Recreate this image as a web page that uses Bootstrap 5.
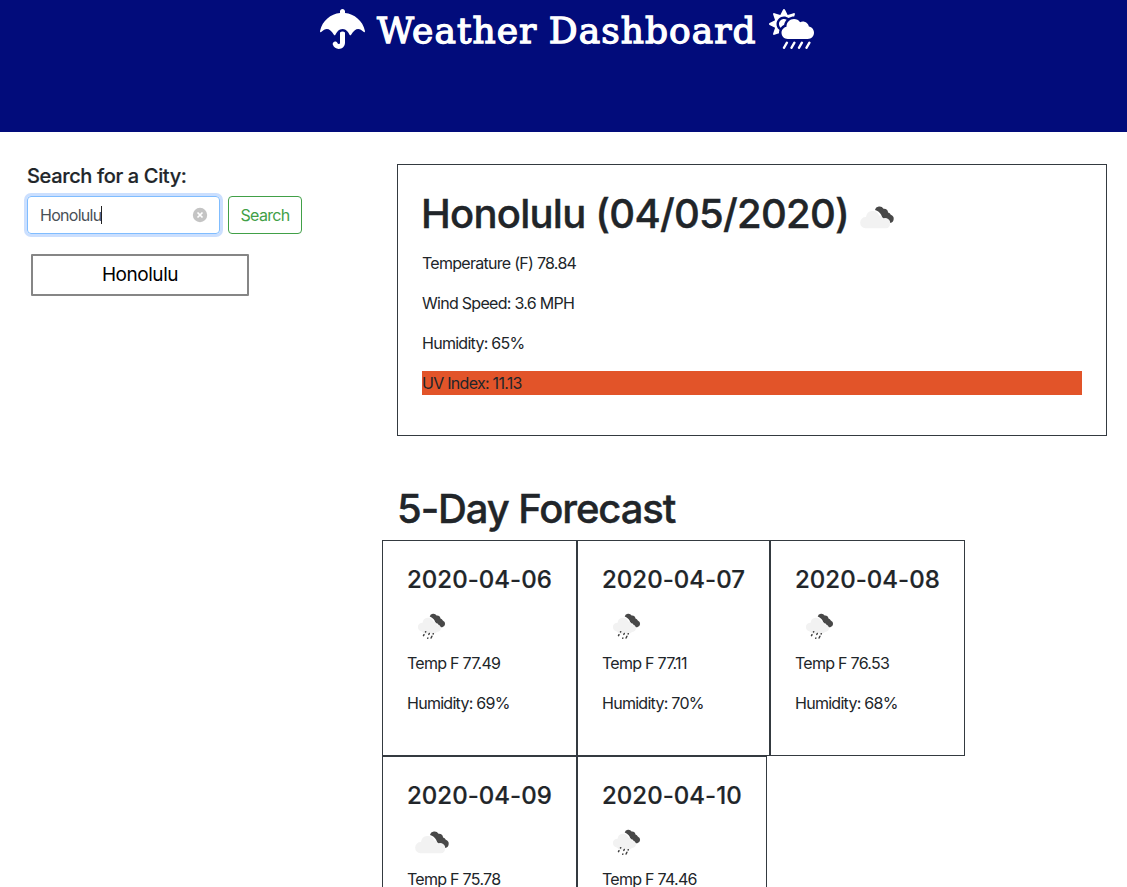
<!DOCTYPE html>
<html lang="en">
<head>
<meta charset="utf-8">
<meta name="viewport" content="width=device-width, initial-scale=1">
<title>Weather Dashboard</title>
<link href="https://cdn.jsdelivr.net/npm/bootstrap@5.3.0/dist/css/bootstrap.min.css" rel="stylesheet">
<style>
body{font-family:Inter,"Liberation Sans",sans-serif;color:#212529;height:100vh;overflow:hidden;letter-spacing:-.72px}
.site-header{background:#020c7b;height:132px;color:#fff;padding:9px 0 0 7px}
.site-header svg{width:45px;height:40px;flex:none}
.site-title{font:400 36px/44px "DejaVu Serif",serif;letter-spacing:1.05px;word-spacing:-1px;-webkit-text-stroke:1.3px #fff;width:380px;margin:0 12px;white-space:nowrap}
.side-col{width:382px;padding:32px 0 0 27px}
.side-col h5{font-size:20px;line-height:24px;letter-spacing:-.35px;margin-bottom:8px;-webkit-text-stroke:.2px}
.city-box{width:193px;height:38px;border:1px solid #80bdff;border-radius:4px;box-shadow:0 0 0 3px #cbdffe;padding:0 11px 0 12px;color:#495057}
.caret{width:1px;height:18px;background:#222}
.btn-find{width:74px;height:38px;padding:0;color:#41a047;border:1px solid #41a047;border-radius:4px;letter-spacing:-.7px}
.history-btn{width:218px;height:42px;margin:20px 0 0 4px;border:2px solid #868686;border-radius:1px;background:#fff;color:#000;font-size:19px;letter-spacing:-.45px}
.main-col{width:745px;padding-top:32px}
.panel{border:1px solid #343a40;padding:24px}
.today{width:710px;height:272px;margin-left:15px}
.today h1,.forecast-title{font-size:40px;letter-spacing:-.75px;white-space:nowrap;-webkit-text-stroke:.4px}
.today h1{height:54px;line-height:50px;margin-left:-1px}
.today svg,.day svg{width:50px;height:50px;flex:none}
.today h1 svg{margin:3px 0 0 3px}
.uv{background:#e25429}
.forecast-title{margin:48px 0 8px 15px;line-height:50px;height:48px;letter-spacing:-1.1px}
.day{height:216px}
.day h4{font-size:24px;line-height:30px;height:28px;letter-spacing:.03px;white-space:nowrap;-webkit-text-stroke:.2px}
.day svg{display:block}
.w-a{width:195px}.w-b{width:193px}.w-c{width:190px}
</style>
</head>
<body>
<svg width="0" height="0" class="position-absolute">
<symbol id="cloudy" viewBox="0 0 50 50">
<path fill="#484848" d="M23 18a4.600 4.600 0 0 1 8.500-1.200 4.300 4.300 0 0 1 4.600 3.700 4.200 4.200 0 0 1 2.700 2.200 4.300 4.300 0 0 1-.6 8.300c-1.800 0-3-.9-3.600-2.300-1-.6-1.500-1.200-1.800-2.200-2.200-.4-3.200-1.600-3.500-3.600-1.500-2.500-3.500-4-6.300-4.900z"/>
<path fill="#f2f2f2" d="M13.500 36.300a5.600 5.600 0 0 1 .5-11.200 6.800 6.800 0 0 1 13.200-1.500 4 4 0 0 1 3.500 3.600 4.600 4.600 0 0 1 7.300 4.800c0 2.500-1.500 4.300-4 4.300z"/>
</symbol>
<symbol id="rainy" viewBox="0 0 50 50">
<path fill="#484848" d="M22.700 15.400a3.800 3.800 0 0 1 6.900-.9 3.600 3.600 0 0 1 3.900 3 3.500 3.500 0 0 1 2.300 1.900 3.600 3.600 0 0 1-.6 6.900c-1.500 0-2.600-.7-3.100-1.900-.8-.4-1.200-1-1.500-1.800-1.800-.3-2.600-1.300-2.900-2.900-1.200-2.100-2.800-3.500-5-4.300z"/>
<path fill="#f2f2f2" d="M15 30.500a4.400 4.400 0 0 1 .6-8.800 5.500 5.500 0 0 1 10.700-1.200 3.300 3.300 0 0 1 3 3 3.900 3.900 0 0 1 4.700 3.500c0 2.300-1.500 4-4 3.900a5 5 0 0 1-7 1 5 5 0 0 1-8-1.400z"/>
<path stroke="#404040" stroke-width="1.500" stroke-linecap="round" fill="none" d="M18.700 30.700l-.2.300M22.300 32.500l-.5.900M26.300 32.700l-.2.300M17 33.700l-.5 1M20.900 37l-.2.200M24.900 35.300l-.8 1.700"/>
</symbol>
</svg>

<header class="site-header d-flex justify-content-center align-items-start">
<svg viewBox="0 0 576 512" fill="#fff"><path d="M575.7 280.8C547.1 144.5 437.3 62.6 320 49.9V32c0-17.700-14.300-32-32-32s-32 14.300-32 32v17.900C138.300 62.600 29.500 144.500.3 280.800c-2.200 10.100 8.500 21.300 18.700 11.400 52-55 107.700-52.400 158.600 37 5.300 9.500 14.900 8.600 19.700 0 20.200-35.400 44.900-73.200 90.700-73.200 58.500 0 88.200 68.800 90.700 73.200 4.800 8.600 14.400 9.500 19.700 0 51-89.500 107.100-91.400 158.600-37 10.300 10 20.900-1.300 18.700-11.400zM256 301.700V432c0 8.800-7.200 16-16 16-7.800 0-13.200-5.300-15.100-10.700-5.900-16.700-24.100-25.400-40.800-19.500-16.700 5.900-25.400 24.200-19.500 40.800 11.200 31.900 41.600 53.300 75.400 53.300 44.100 0 80-35.900 80-80V301.600c-9.100-7.900-19.800-13.600-32-13.600-12.300.1-22.400 4.800-32 13.700z"/></svg>
<h1 class="site-title">Weather Dashboard</h1>
<svg viewBox="0 0 576 512" fill="#fff"><path d="M510.500 225.500c-6.900-37.200-39.300-65.500-78.500-65.500-12.300 0-23.900 3-34.300 8-17.400-24.100-45.600-40-77.700-40-53 0-96 43-96 96 0 .5.2 1.100.2 1.600C187.600 233 160 265.200 160 304c0 44.200 35.800 80 80 80h256c44.200 0 80-35.800 80-80 0-39.200-28.200-71.700-65.500-78.500zm-386.400 34.400c-37.400-37.400-37.400-98.300 0-135.800 34.600-34.600 89.100-36.800 126.700-7.400 20-12.900 43.600-20.700 69.200-20.700.7 0 1.300.2 2 .2l8.900-26.700c3.400-10.200-6.300-19.800-16.500-16.400l-75.300 25.100-35.500-71c-4.800-9.600-18.500-9.600-23.300 0l-35.500 71-75.300-25.100c-10.200-3.400-19.800 6.300-16.400 16.500l25.100 75.300-71 35.500c-9.600 4.800-9.600 18.500 0 23.300l71 35.500-25.100 75.300c-3.400 10.200 6.300 19.800 16.500 16.500l59.200-19.700c-.2-2.400-.7-4.700-.7-7.200 0-12.500 2.300-24.500 6.200-35.900-3.600-2.700-7.100-5.200-10.200-8.300zm69.800-58c4.300-24.500 15.800-46.400 31.900-64-9.800-6.200-21.400-9.900-33.800-9.900-35.300 0-64 28.700-64 64 0 18.700 8.200 35.400 21.100 47.100 11.300-15.900 26.600-28.900 44.800-37.200z"/><path stroke="#fff" stroke-width="32" stroke-linecap="round" d="M516.600 432l-36.600 64M420.600 432l-36.600 64M324.600 432l-36.600 64M228.600 432l-36.600 64"/></svg>
</header>

<main class="d-flex">
<aside class="side-col flex-shrink-0">
<h5>Search for a City:</h5>
<div class="d-flex gap-2">
<div class="city-box d-flex align-items-center"><span>Honolulu</span><i class="caret"></i>
<svg class="ms-auto" width="16" height="16" viewBox="0 0 16 16"><circle cx="8" cy="8" r="7.200" fill="#c4c4c4"/><path d="M5.500 5.500l5 5m0-5l-5 5" stroke="#fff" stroke-width="1.700"/></svg></div>
<button class="btn btn-find">Search</button>
</div>
<button class="history-btn d-block">Honolulu</button>
</aside>
<section class="main-col flex-shrink-0">
<div class="today panel">
<h1 class="d-flex"><span>Honolulu (04/05/2020)</span><svg><use href="#cloudy"/></svg></h1>
<p>Temperature (F) 78.84</p>
<p>Wind Speed: 3.6 MPH</p>
<p>Humidity: 65%</p>
<p class="uv">UV Index: 11.13</p>
</div>
<h1 class="forecast-title">5-Day Forecast</h1>
<div class="d-flex flex-wrap">
<div class="day panel w-a"><h4>2020-04-06</h4><svg><use href="#rainy"/></svg><p>Temp F 77.49</p><p>Humidity: 69%</p></div>
<div class="day panel w-b"><h4>2020-04-07</h4><svg><use href="#rainy"/></svg><p>Temp F 77.11</p><p>Humidity: 70%</p></div>
<div class="day panel w-a me-5"><h4>2020-04-08</h4><svg><use href="#rainy"/></svg><p>Temp F 76.53</p><p>Humidity: 68%</p></div>
<div class="day panel w-a"><h4>2020-04-09</h4><svg><use href="#cloudy"/></svg><p>Temp F 75.78</p></div>
<div class="day panel w-c"><h4>2020-04-10</h4><svg><use href="#rainy"/></svg><p>Temp F 74.46</p></div>
</div>
</section>
</main>
<script src="https://cdn.jsdelivr.net/npm/bootstrap@5.3.0/dist/js/bootstrap.bundle.min.js"></script>
</body>
</html>
